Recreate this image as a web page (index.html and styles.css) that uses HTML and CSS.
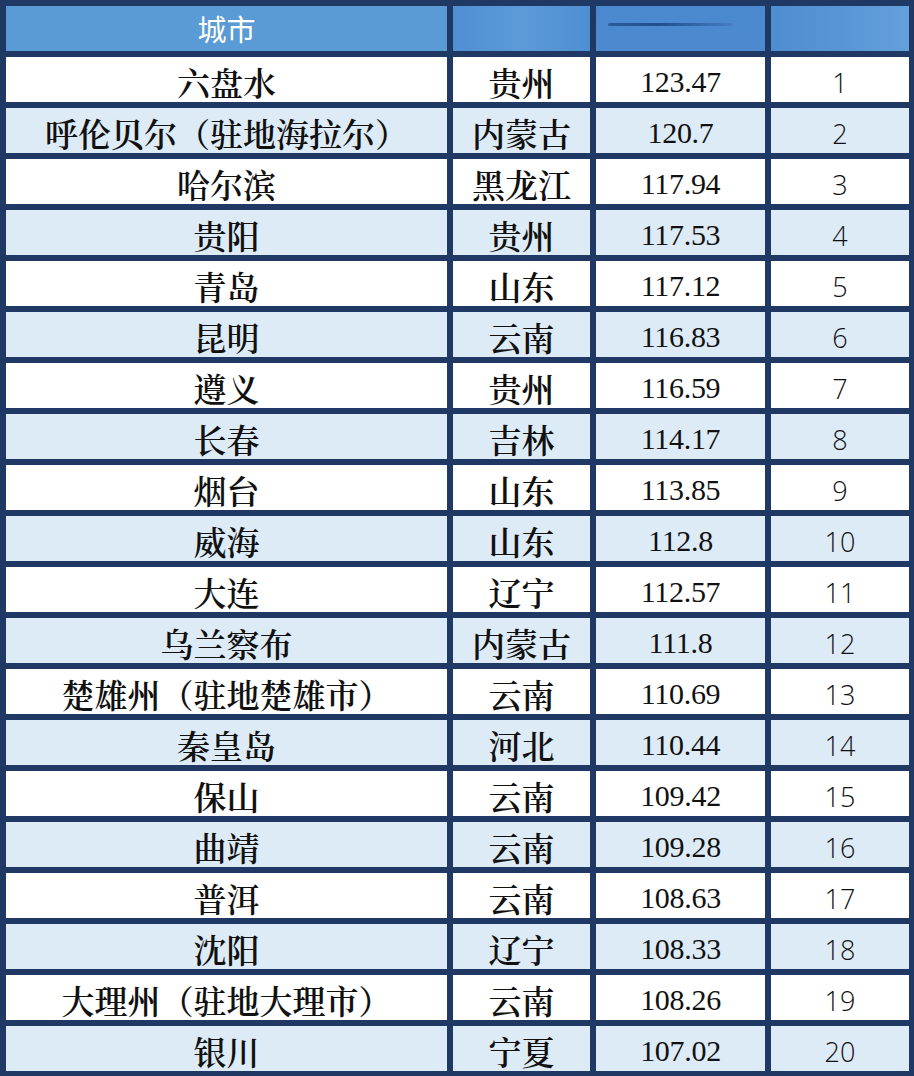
FILE: index.html
```html
<!DOCTYPE html>
<html lang="zh-CN">
<head>
<meta charset="utf-8">
<link rel="stylesheet" href="styles.css">
</head>
<body>
<div class="table">
  <div class="hcell h1">城市</div>
  <div class="hcell h2"></div>
  <div class="hcell h3"><div class="smear"></div></div>
  <div class="hcell h4"></div>

  <div class="c city">六盘水</div><div class="c prov">贵州</div><div class="c num">123.47</div><div class="c rank">1</div>
  <div class="c city alt">呼伦贝尔（驻地海拉尔）</div><div class="c prov alt">内蒙古</div><div class="c num alt">120.7</div><div class="c rank alt">2</div>
  <div class="c city">哈尔滨</div><div class="c prov">黑龙江</div><div class="c num">117.94</div><div class="c rank">3</div>
  <div class="c city alt">贵阳</div><div class="c prov alt">贵州</div><div class="c num alt">117.53</div><div class="c rank alt">4</div>
  <div class="c city">青岛</div><div class="c prov">山东</div><div class="c num">117.12</div><div class="c rank">5</div>
  <div class="c city alt">昆明</div><div class="c prov alt">云南</div><div class="c num alt">116.83</div><div class="c rank alt">6</div>
  <div class="c city">遵义</div><div class="c prov">贵州</div><div class="c num">116.59</div><div class="c rank">7</div>
  <div class="c city alt">长春</div><div class="c prov alt">吉林</div><div class="c num alt">114.17</div><div class="c rank alt">8</div>
  <div class="c city">烟台</div><div class="c prov">山东</div><div class="c num">113.85</div><div class="c rank">9</div>
  <div class="c city alt">威海</div><div class="c prov alt">山东</div><div class="c num alt">112.8</div><div class="c rank alt">10</div>
  <div class="c city">大连</div><div class="c prov">辽宁</div><div class="c num">112.57</div><div class="c rank">11</div>
  <div class="c city alt">乌兰察布</div><div class="c prov alt">内蒙古</div><div class="c num alt">111.8</div><div class="c rank alt">12</div>
  <div class="c city">楚雄州（驻地楚雄市）</div><div class="c prov">云南</div><div class="c num">110.69</div><div class="c rank">13</div>
  <div class="c city alt">秦皇岛</div><div class="c prov alt">河北</div><div class="c num alt">110.44</div><div class="c rank alt">14</div>
  <div class="c city">保山</div><div class="c prov">云南</div><div class="c num">109.42</div><div class="c rank">15</div>
  <div class="c city alt">曲靖</div><div class="c prov alt">云南</div><div class="c num alt">109.28</div><div class="c rank alt">16</div>
  <div class="c city">普洱</div><div class="c prov">云南</div><div class="c num">108.63</div><div class="c rank">17</div>
  <div class="c city alt">沈阳</div><div class="c prov alt">辽宁</div><div class="c num alt">108.33</div><div class="c rank alt">18</div>
  <div class="c city">大理州（驻地大理市）</div><div class="c prov">云南</div><div class="c num">108.26</div><div class="c rank">19</div>
  <div class="c city alt">银川</div><div class="c prov alt">宁夏</div><div class="c num alt">107.02</div><div class="c rank alt">20</div>
</div>
</body>
</html>
```
FILE: styles.css
```css
html, body {
  margin: 0;
  padding: 0;
  background: #1f3864;
}
.table {
  width: 914px;
  height: 1076px;
  box-sizing: border-box;
  padding: 6px 5px 5px 6px;
  background: #1f3864;
  display: grid;
  grid-template-columns: 441px 137px 169px 138px;
  grid-auto-rows: 45px;
  gap: 6px;
}
.hcell {
  background: #5b9bd5;
}
.h1 {
  color: #ffffff;
  font-family: "Noto Sans CJK SC", sans-serif;
  font-size: 29px;
  display: flex;
  align-items: center;
  justify-content: center;
  padding-bottom: 2px;
  box-sizing: border-box;
}
.h2 {
  background: linear-gradient(90deg, #4f8fd2 0%, #5c9ad8 50%, #4f8ed1 100%);
}
.h3 {
  background: linear-gradient(180deg, #4a88cf 0%, #4d8ad0 100%);
  display: flex;
  flex-direction: column;
  padding-top: 17px;
  box-sizing: border-box;
}
.smear {
  height: 3px;
  width: 125px;
  margin-left: 12px;
  border-radius: 2px;
  background: linear-gradient(90deg, #2a5d9a 0%, #1f4f8c 40%, rgba(60,110,180,0.4) 100%);
}
.h4 {
  background: linear-gradient(90deg, #4f8dd1 0%, #5997d6 60%, #64a0db 100%);
}
.c {
  background: #ffffff;
  color: #111111;
  display: flex;
  align-items: center;
  justify-content: center;
  padding-top: 5px;
  box-sizing: border-box;
  white-space: nowrap;
}
.c.alt {
  background: #ddebf7;
}
.city, .prov {
  font-family: "Noto Serif CJK SC", "Noto Sans CJK SC", serif;
  font-size: 33px;
  font-weight: 600;
  padding-top: 4px;
}
.num {
  font-family: "Liberation Serif", serif;
  font-size: 30px;
  letter-spacing: -0.3px;
}
.rank {
  font-family: "Open Sans", "Noto Sans", sans-serif;
  font-weight: 300;
  font-size: 27px;
  padding-top: 6px;
}
```
